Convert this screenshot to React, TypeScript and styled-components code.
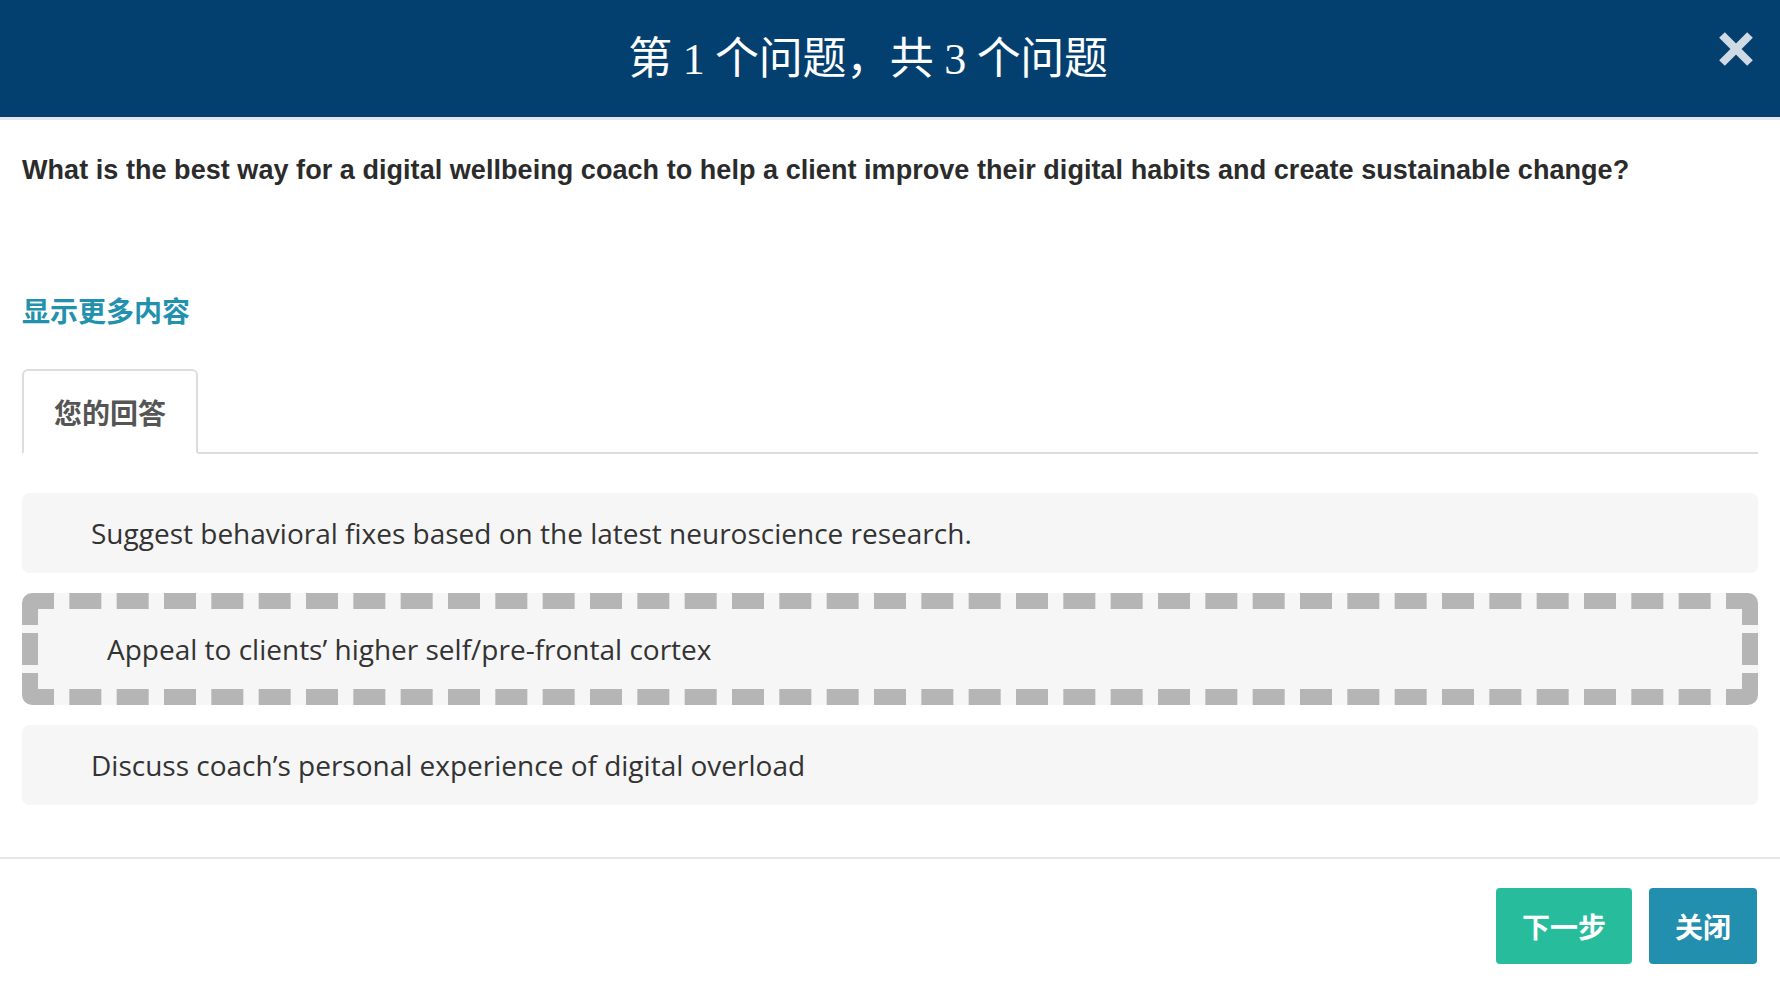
import * as React from "react";
import styled, { createGlobalStyle } from "styled-components";

const answers = [
  "Suggest behavioral fixes based on the latest neuroscience research.",
  "Appeal to clients’ higher self/pre-frontal cortex",
  "Discuss coach’s personal experience of digital overload",
];

const App: React.FC = () => {
  return (
    <>
      <GlobalStyle />
      <Modal>
        <Header>
          <Title>第 1 个问题，共 3 个问题</Title>
          <CloseButton aria-label='close'>
            <svg width='40' height='40' viewBox='0 0 40 40'>
              <path
                d='M6 6 L34 34 M34 6 L6 34'
                stroke='#cfdae4'
                strokeWidth='8'
                strokeLinecap='butt'
              />
            </svg>
          </CloseButton>
        </Header>

        <Body>
          <Question>
            What is the best way for a digital wellbeing coach to help a client
            improve their digital habits and create sustainable change?
          </Question>
          <MoreLink href='#'>显示更多内容</MoreLink>

          <TabBar>
            <Tab>您的回答</Tab>
          </TabBar>

          <AnswerList>
            {answers.map((text, i) => (
              <Answer key={i} dragging={i === 1}>
                {text}
              </Answer>
            ))}
          </AnswerList>
        </Body>

        <Footer>
          <Button tone='next'>下一步</Button>
          <Button tone='close'>关闭</Button>
        </Footer>
      </Modal>
    </>
  );
};

export default App;

const GlobalStyle = createGlobalStyle`
  html, body {
    margin: 0;
    padding: 0;
    background: #fff;
  }
  body {
    font-family: "Liberation Sans", Arial, "Noto Sans CJK SC", sans-serif;
    overflow: hidden;
  }
`;

const Modal = styled.div`
  width: 1780px;
  min-height: 984px;
  display: flex;
  flex-direction: column;
  background: #fff;
`;

const Header = styled.div`
  height: 117px;
  display: flex;
  align-items: center;
  padding: 0 22px;
  background: #03406f;
  border-bottom: 3px solid #e4e6e9;
`;

const Title = styled.h1`
  flex: 1;
  margin: 0;
  text-align: center;
  color: #fff;
  font-family: "Liberation Serif", "Noto Sans CJK SC", serif;
  font-size: 44px;
  font-weight: 400;
  letter-spacing: -0.3px;
  padding-bottom: 8px;
`;

const CloseButton = styled.button`
  width: 44px;
  height: 44px;
  padding: 0;
  border: none;
  background: none;
  display: flex;
  align-items: center;
  justify-content: center;
  margin-top: -20px;
  cursor: pointer;
`;

const Body = styled.div`
  padding: 0 22px;
`;

const Question = styled.p`
  margin: 32px 0 104px;
  color: #2b2b2b;
  font-family: "Liberation Sans", Arial, sans-serif;
  font-weight: 700;
  font-size: 27px;
  letter-spacing: 0.05px;
  line-height: 36px;
`;

const MoreLink = styled.a`
  display: block;
  color: #2191ae;
  text-decoration: none;
  font-family: "Noto Sans CJK SC", sans-serif;
  font-weight: 700;
  font-size: 28px;
  line-height: 36px;
`;

const TabBar = styled.div`
  display: flex;
  margin-top: 41px;
  border-bottom: 2px solid #dcdcdc;
`;

const Tab = styled.div`
  height: 81px;
  padding: 0 30px;
  display: flex;
  align-items: center;
  margin-bottom: -2px;
  border: 2px solid #dddddd;
  border-bottom-color: #fff;
  border-radius: 6px 6px 0 0;
  background: #fff;
  color: #555;
  font-family: "Noto Sans CJK SC", sans-serif;
  font-weight: 700;
  font-size: 28px;
`;

const AnswerList = styled.div`
  display: flex;
  flex-direction: column;
  gap: 20px;
  margin-top: 39px;
`;

const Answer = styled.div<{ dragging?: boolean }>`
  display: flex;
  align-items: center;
  height: ${(p) => (p.dragging ? 112 : 80)}px;
  box-sizing: border-box;
  padding-left: 69px;
  background: #f6f6f6;
  border-radius: ${(p) => (p.dragging ? 10 : 7)}px;
  border: ${(p) => (p.dragging ? "16px dashed #b5b5b5" : "none")};
  color: #333;
  font-family: "Open Sans", sans-serif;
  font-size: 28px;
`;

const Footer = styled.div`
  display: flex;
  justify-content: flex-end;
  gap: 17px;
  margin-top: 52px;
  padding: 29px 23px 21px;
  border-top: 2px solid #e6e6e6;
`;

const Button = styled.button<{ tone: "next" | "close" }>`
  height: 76px;
  padding: 0 26px;
  border: none;
  border-radius: 4px;
  background: ${(p) => (p.tone === "next" ? "#27bd9c" : "#218fad")};
  color: #fff;
  font-family: "Noto Sans CJK SC", sans-serif;
  font-weight: 700;
  font-size: 28px;
  cursor: pointer;
`;
